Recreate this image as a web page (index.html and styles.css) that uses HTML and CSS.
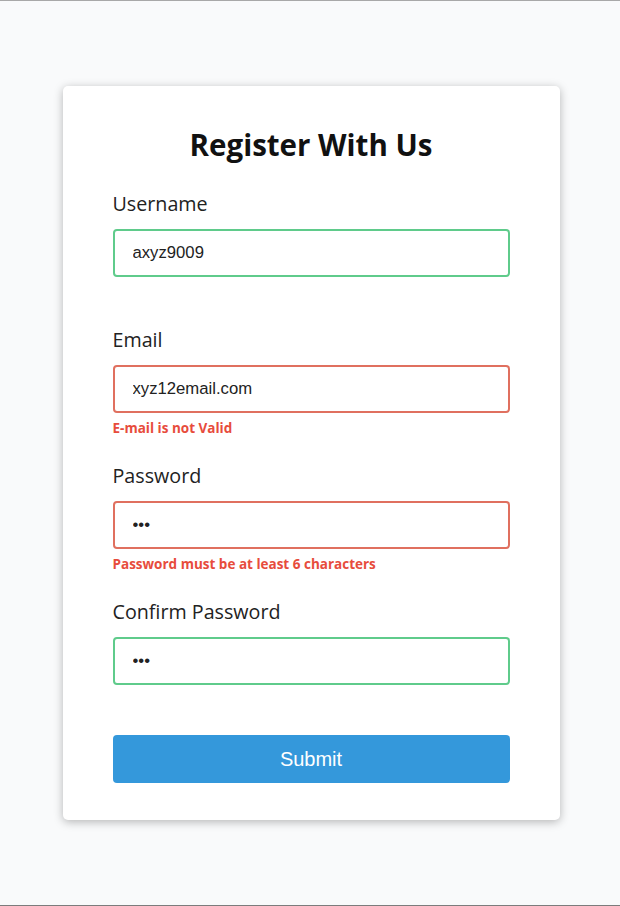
FILE: index.html
```html
<!DOCTYPE html>
<html lang="en">
<head>
<meta charset="utf-8">
<title>Register With Us</title>
<link rel="stylesheet" href="styles.css">
</head>
<body>
<div class="page">
  <form class="card">
    <h2 class="title">Register With Us</h2>
    <div class="field success">
      <label for="username">Username</label>
      <input type="text" id="username" value="axyz9009">
      <small>Error message</small>
    </div>
    <div class="field error">
      <label for="email">Email</label>
      <input type="text" id="email" value="xyz12email.com">
      <small>E-mail is not Valid</small>
    </div>
    <div class="field error">
      <label for="password">Password</label>
      <input type="password" id="password" value="abc">
      <small>Password must be at least 6 characters</small>
    </div>
    <div class="field success">
      <label for="password2">Confirm Password</label>
      <input type="password" id="password2" value="abc">
      <small>Error message</small>
    </div>
    <button type="button" class="submit">Submit</button>
  </form>
</div>
</body>
</html>
```

FILE: styles.css
```css
* { box-sizing: border-box; }
html, body { margin: 0; padding: 0; }
body {
  background: #f9fafb;
  font-family: "Open Sans", "Liberation Sans", sans-serif;
}
.page {
  height: 906px;
  border-top: 1px solid #a8a8a8;
  border-bottom: 1px solid #7c7c7c;
  padding-left: 2px;
  display: flex;
  align-items: center;
  justify-content: center;
}
.card {
  width: 497px;
  background: #fff;
  border-radius: 5px;
  box-shadow: 0 2px 10px rgba(0, 0, 0, 0.28);
  padding: 40px 50px 37px;
}
.title {
  margin: 0 0 27px;
  text-align: center;
  font-size: 29.5px;
  line-height: 38px;
  font-weight: 700;
  color: #111;
}
.field { margin-bottom: 26px; }
.field label {
  display: block;
  font-size: 19.7px;
  line-height: 26px;
  color: #222;
  margin-bottom: 12px;
}
.field input {
  display: block;
  width: 100%;
  height: 48px;
  border: 2px solid #ddd;
  border-radius: 4px;
  padding: 0 18px;
  font-family: "Liberation Sans", Arial, sans-serif;
  font-size: 16.7px;
  color: #222;
  outline: none;
}
.field.success input { border-color: #5fcb8b; }
.field.error input { border-color: #e0705f; }
.field small {
  display: block;
  visibility: hidden;
  margin-top: 6px;
  font-size: 13.5px;
  line-height: 18px;
  font-weight: 700;
  color: #e74c3c;
}
.field.error small { visibility: visible; }
.submit {
  display: block;
  width: 100%;
  height: 48px;
  border: none;
  border-radius: 4px;
  background: #3498db;
  color: #fff;
  font-family: "Liberation Sans", Arial, sans-serif;
  font-size: 20px;
  cursor: pointer;
}
```
